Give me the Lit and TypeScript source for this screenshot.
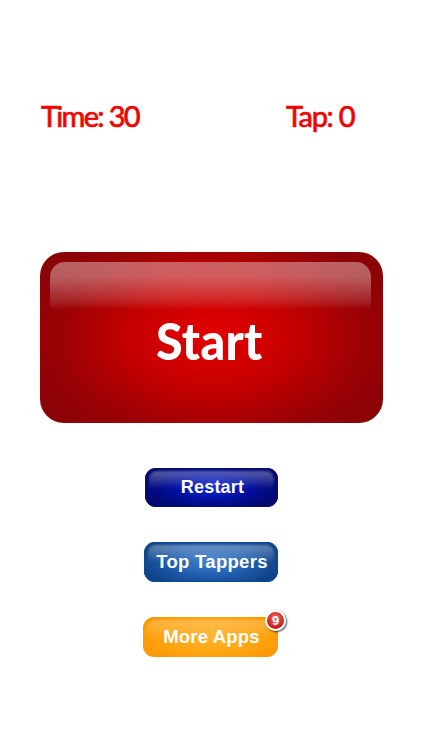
import { LitElement, html, css } from "lit";
import { customElement } from "lit/decorators.js";

@customElement("app-root")
export class AppRoot extends LitElement {
  static styles = css`
    :host { display: block; width: 422px; height: 750px; background: #fff; overflow: hidden; font-family: "Liberation Sans", Arial, sans-serif; }
    .page { display: flex; flex-direction: column; height: 750px; box-sizing: border-box; padding: 97px 0 0 0; }
    .scores { display: flex; height: 36px; margin-left: 41px; align-items: center; color: #f00400; font-family: Lato, sans-serif; font-size: 29px; font-weight: 400; letter-spacing: -1.3px; -webkit-text-stroke: 0.7px #f00400; }
    .time { width: 245px; letter-spacing: -1.7px; }
    .start { position: relative; margin: 119px 0 0 40px; width: 343px; height: 171px; border-radius: 24px; display: flex; align-items: center; justify-content: center; overflow: hidden;
      background: radial-gradient(ellipse 200px 125px at 50% 50%, #e60000 0%, #c40000 42%, #990205 78%, #8a0307 100%); }
    .start .gloss { position: absolute; left: 10px; right: 12px; top: 10px; height: 48px; border-radius: 15px 15px 0 0; filter: blur(.6px);
      background: linear-gradient(180deg, rgba(255,255,255,.38) 0%, rgba(255,255,255,.36) 30%, rgba(255,255,255,.14) 80%, rgba(255,255,255,0) 100%); }
    .start span { position: relative; top: 2px; left: -2px; color: #fff; font-family: Lato, sans-serif; font-weight: 900; font-size: 52px; letter-spacing: .3px; transform: scaleX(.93); }
    .btns { display: flex; flex-direction: column; margin-top: 45px; gap: 35px; align-items: center; }
    .btn { position: relative; box-sizing: border-box; height: 40px; border-radius: 11px; display: flex; align-items: center; justify-content: center; color: #fff; font-weight: 700; font-size: 18px; letter-spacing: .2px; }
    .btn::before { content: ""; position: absolute; left: 4px; right: 4px; top: 3px; height: 18px; border-radius: 8px 8px 0 0; filter: blur(1px); background: linear-gradient(180deg, rgba(255,255,255,.34), rgba(255,255,255,.16) 55%, rgba(255,255,255,0)); }
    .btn span { position: relative; left: 1px; }
    .restart { width: 133px; height: 39px; margin-left: 1px; padding-bottom: 1px; background: radial-gradient(ellipse 72px 24px at 50% 50%, #0a25e0 0%, #020f9c 55%, #02086c 100%); box-shadow: inset 0 0 0 1px #0a0f70; }
    .top { width: 134px; background: radial-gradient(ellipse 72px 26px at 50% 50%, #3c82cf 0%, #1d5aa8 60%, #0f4286 100%); box-shadow: inset 0 0 0 1px #124a8e; font-size: 18.5px; letter-spacing: .3px; }
    .more { width: 135px; margin-left: -1px; background: radial-gradient(ellipse 74px 26px at 50% 50%, #ffb42e 0%, #ffa511 60%, #fb9a05 100%); font-size: 18.5px; }
    .more::before { background: linear-gradient(180deg, rgba(255,255,255,.26), rgba(255,255,255,.12) 55%, rgba(255,255,255,0)); }
    .badge { position: absolute; top: -7px; right: -8px; width: 21px; height: 21px; box-sizing: border-box; border-radius: 50%; border: 2px solid #fff; background: radial-gradient(circle at 50% 35%, #ef6a62, #c4201c 70%); box-shadow: 1px 1px 2px rgba(0,0,0,.75); display: flex; align-items: center; justify-content: center; font-size: 13px; font-weight: 700; letter-spacing: 0; color: #fff; }
  `;
  render() {
    return html`<div class="page">
      <div class="scores"><div class="time">Time: 30</div><div>Tap: 0</div></div>
      <div class="start"><div class="gloss"></div><span>Start</span></div>
      <div class="btns">
        <div class="btn restart"><span>Restart</span></div>
        <div class="btn top"><span>Top Tappers</span></div>
        <div class="btn more"><span>More Apps</span><div class="badge">9</div></div>
      </div>
    </div>`;
  }
}
